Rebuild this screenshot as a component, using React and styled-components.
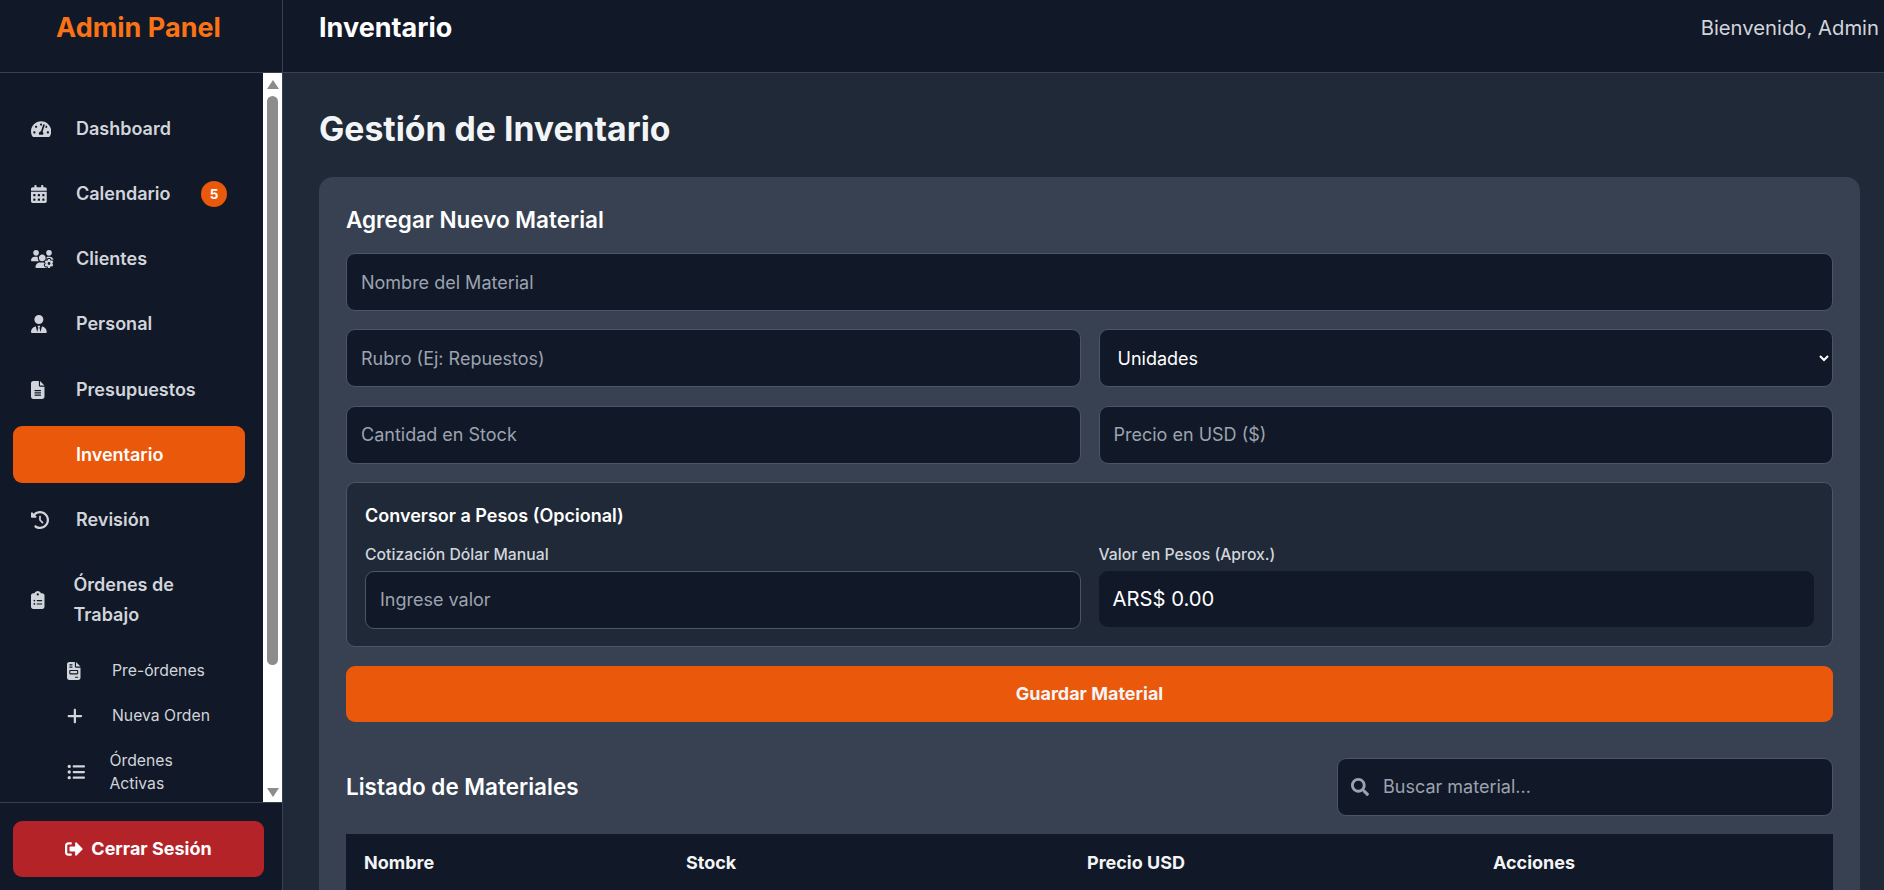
import React from "react";
import styled, { createGlobalStyle } from "styled-components";
import { FaTachometerAlt, FaSignOutAlt, FaSearch } from "react-icons/fa";
import {
  FaCalendarDays, FaUsersGear, FaUserTie, FaFileLines, FaClockRotateLeft,
  FaClipboardList, FaFileInvoice, FaPlus, FaListUl,
} from "react-icons/fa6";

const Global = createGlobalStyle`
  html, body { margin: 0; height: 100%; overflow: hidden; background: #1f2937; }
  * { box-sizing: border-box; }
  body { font-family: Inter, "Liberation Sans", sans-serif; color: #f3f4f6; }
`;

const Shell = styled.div`display: flex; height: 890px; overflow: hidden;`;

const Sidebar = styled.aside`
  width: 283px; flex: none; display: flex; flex-direction: column;
  background: #111827; border-right: 1px solid #374151;
`;
const Brand = styled.div`
  height: 73px; flex: none; padding: 13px 5px 0 0; text-align: center;
  border-bottom: 1px solid #374151;
  font-size: 27px; line-height: 30px; font-weight: 700; color: #f97316;
`;
const NavArea = styled.div`flex: 1; min-height: 0; position: relative; overflow: hidden;`;
const NavList = styled.nav`padding: 27.4px 37px 0 13px; display: flex; flex-direction: column; gap: 8.2px;`;
const NavItem = styled.a`
  display: flex; align-items: center; min-height: 57px; padding: 13.5px 18px;
  border-radius: 9px; font-size: 18px; line-height: 30px; font-weight: 600;
  color: ${p => (p.$active ? "#ffffff" : "#d1d5db")};
  background: ${p => (p.$active ? "#ea580c" : "transparent")};
`;
const IconBox = styled.span`
  width: ${p => (p.$tight ? "42.5px" : "45px")}; flex: none; display: flex; align-items: center;
  svg { height: 18px; width: ${p => p.$w || 18}px; }
`;
const Badge = styled.span`
  margin-left: auto; width: 26px; height: 26px; border-radius: 50%; background: #ea580c;
  color: #fff; font-size: 13.5px; font-weight: 700; display: flex; align-items: center; justify-content: center;
`;
const SubList = styled.div`display: flex; flex-direction: column; margin-top: -3.8px; padding-left: 36px;`;
const SubItem = styled.a`
  display: flex; align-items: center; padding: 11px 18px; font-size: 15.75px; line-height: 23px;
  color: #d1d5db;
`;
const Track = styled.div`
  position: absolute; top: 0; right: 0; bottom: 0; width: 19px; background: #fff;
  display: flex; flex-direction: column; align-items: center;
`;
const ArrowUp = styled.span`
  margin-top: 7px; width: 0; height: 0;
  border-left: 6px solid transparent; border-right: 6px solid transparent; border-bottom: 9px solid #8c8c8c;
`;
const Thumb = styled.span`
  margin-top: 7px; width: 11px; height: 569px; border-radius: 6px; background: #8c8c8c;
`;
const ArrowDown = styled.span`
  margin-top: auto; margin-bottom: 5px; width: 0; height: 0;
  border-left: 6px solid transparent; border-right: 6px solid transparent; border-top: 9px solid #8c8c8c;
`;
const SideFoot = styled.div`
  height: 88px; flex: none; border-top: 1px solid #374151; padding: 18px 18px 0 13px;
`;
const Logout = styled.button`
  width: 100%; height: 56px; padding: 0 0 1px; border: 0; border-radius: 9px; background: #b32328; color: #fff;
  font: 700 18px Inter, sans-serif; display: flex; align-items: center; justify-content: center; gap: 8px;
`;

const Main = styled.div`flex: 1; min-width: 0; display: flex; flex-direction: column;`;
const TopBar = styled.header`
  height: 73px; flex: none; background: #111827; border-bottom: 1px solid #374151;
  padding: 13px 5px 0 36px; display: flex; justify-content: space-between; align-items: flex-start;
`;
const TopTitle = styled.h1`margin: 0; font-size: 27px; line-height: 30px; font-weight: 700; color: #fff;`;
const Welcome = styled.span`font-size: 20.25px; line-height: 30px; color: #d1d5db;`;
const Content = styled.main`flex: 1; min-height: 0; padding: 32px 24px 0 36px; overflow: hidden;`;
const PageTitle = styled.h2`margin: 0 0 24px; font-size: 33.75px; line-height: 48px; font-weight: 700; color: #f3f4f6;`;
const Card = styled.section`background: #374151; border-radius: 14px; padding: 27px;`;
const CardTitle = styled.h3`margin: 0 0 17px; font-size: 22.5px; line-height: 32px; font-weight: 600; color: #fff;`;
const Form = styled.div`display: flex; flex-direction: column; gap: 18.4px;`;
const TwoCols = styled.div`display: grid; grid-template-columns: 1fr 1fr; gap: 18px;`;
const Field = styled.input`
  width: 100%; height: 58px; padding: 0 14px; border: 1px solid #4b5563; border-radius: 9px;
  background: #111827; color: #fff; font: 400 18px Inter, sans-serif; outline: none;
  &::placeholder { color: #9ca3af; opacity: 1; }
`;
const Select = styled.select`
  width: 100%; height: 58px; padding: 0 0 0 14px; border: 1px solid #4b5563; border-radius: 9px;
  background: #111827; color: #fff; font: 400 18px Inter, sans-serif; color-scheme: dark; outline: none;
`;
const Panel = styled.div`
  background: #1f2937; border: 1px solid #4b5563; border-radius: 9px; padding: 18px 18px 17.5px;
`;
const PanelTitle = styled.h4`margin: 0 0 12px; font-size: 18px; line-height: 30px; font-weight: 600; color: #fff;`;
const Label = styled.label`display: block; margin-bottom: 3.5px; font-size: 15.75px; line-height: 24px; font-weight: 500; color: #d1d5db;`;
const ValueBox = styled.div`
  height: 56px; padding: 0 14px; border-radius: 9px; background: #111827; color: #fff;
  font-size: 20.25px; display: flex; align-items: center;
`;
const SaveButton = styled.button`
  display: block; width: 100%; height: 56px; margin-top: 0; border: 0; border-radius: 9px;
  background: #ea580c; color: #f3f4f6; font: 700 18px Inter, sans-serif;
`;
const ListHead = styled.div`
  margin-top: 36px; display: flex; align-items: center; justify-content: space-between;
`;
const ListTitle = styled.h3`margin: 0; font-size: 22.5px; line-height: 32px; font-weight: 600; color: #fff;`;
const Search = styled.div`
  width: 496px; height: 58px; padding: 0 13px; display: flex; align-items: center; gap: 14px;
  background: #111827; border: 1px solid #4b5563; border-radius: 9px; color: #9ca3af;
  svg { width: 18px; height: 18px; flex: none; }
`;
const SearchInput = styled.input`
  flex: 1; min-width: 0; border: 0; background: none; outline: none; color: #fff; font: 400 18px Inter, sans-serif; padding: 0;
  &::placeholder { color: #9ca3af; opacity: 1; }
`;
const TableHead = styled.div`
  margin-top: 18px; height: 58px; background: #111827; padding: 0 18px;
  display: grid; grid-template-columns: 322px 401px 406px 1fr; align-items: center;
  font-size: 18px; font-weight: 700; color: #f3f4f6;
`;

const nav = [
  [FaTachometerAlt, 20.25, "Dashboard"],
  [FaCalendarDays, 15.75, "Calendario", "5"],
  [FaUsersGear, 22.5, "Clientes"],
  [FaUserTie, 15.75, "Personal"],
  [FaFileLines, 13.5, "Presupuestos"],
  [null, 18, "Inventario"],
  [FaClockRotateLeft, 18, "Revisión"],
];

export default function App() {
  return (
    <Shell>
      <Global />
      <Sidebar>
        <Brand>Admin Panel</Brand>
        <NavArea>
          <NavList>
            {nav.map(([Icon, w, label, badge]) => (
              <NavItem key={label} $active={label === "Inventario"}>
                <IconBox $w={w}>{Icon && <Icon />}</IconBox>
                {label}
                {badge && <Badge>{badge}</Badge>}
              </NavItem>
            ))}
            <NavItem>
              <IconBox $tight $w={13.5}><FaClipboardList /></IconBox>
              <span>Órdenes de Trabajo</span>
            </NavItem>
            <SubList>
              <SubItem><IconBox $w={13.5}><FaFileInvoice /></IconBox>Pre-órdenes</SubItem>
              <SubItem><IconBox $w={15.75}><FaPlus /></IconBox>Nueva Orden</SubItem>
              <SubItem><IconBox $tight $w={18}><FaListUl /></IconBox><span>Órdenes<br />Activas</span></SubItem>
            </SubList>
          </NavList>
          <Track><ArrowUp /><Thumb /><ArrowDown /></Track>
        </NavArea>
        <SideFoot>
          <Logout><FaSignOutAlt />Cerrar Sesión</Logout>
        </SideFoot>
      </Sidebar>
      <Main>
        <TopBar>
          <TopTitle>Inventario</TopTitle>
          <Welcome>Bienvenido, Admin</Welcome>
        </TopBar>
        <Content>
          <PageTitle>Gestión de Inventario</PageTitle>
          <Card>
            <CardTitle>Agregar Nuevo Material</CardTitle>
            <Form>
              <Field placeholder="Nombre del Material" />
              <TwoCols>
                <Field placeholder="Rubro (Ej: Repuestos)" />
                <Select defaultValue="Unidades"><option>Unidades</option></Select>
              </TwoCols>
              <TwoCols>
                <Field placeholder="Cantidad en Stock" />
                <Field placeholder="Precio en USD ($)" />
              </TwoCols>
              <Panel>
                <PanelTitle>Conversor a Pesos (Opcional)</PanelTitle>
                <TwoCols>
                  <div>
                    <Label>Cotización Dólar Manual</Label>
                    <Field placeholder="Ingrese valor" />
                  </div>
                  <div>
                    <Label>Valor en Pesos (Aprox.)</Label>
                    <ValueBox>ARS$ 0.00</ValueBox>
                  </div>
                </TwoCols>
              </Panel>
              <SaveButton>Guardar Material</SaveButton>
            </Form>
            <ListHead>
              <ListTitle>Listado de Materiales</ListTitle>
              <Search><FaSearch /><SearchInput placeholder="Buscar material..." /></Search>
            </ListHead>
            <TableHead>
              <span>Nombre</span><span>Stock</span><span>Precio USD</span><span>Acciones</span>
            </TableHead>
          </Card>
        </Content>
      </Main>
    </Shell>
  );
}
